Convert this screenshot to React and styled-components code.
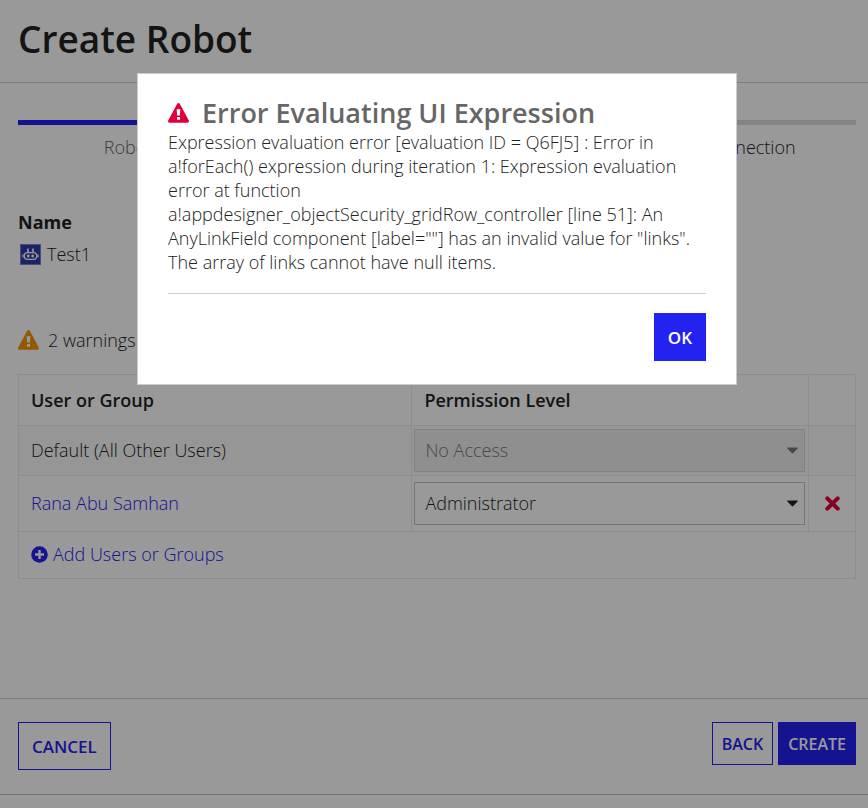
import React from 'react';
import styled, { createGlobalStyle } from 'styled-components';

const GlobalStyle = createGlobalStyle`
  * {
    box-sizing: border-box;
  }
  body {
    margin: 0;
    background: #fff;
    color: #222;
    font-family: 'Open Sans', 'Noto Sans', sans-serif;
    font-size: 18px;
    font-weight: 300;
    line-height: 24px;
  }
`;

const Page = styled.div`
  display: flex;
  flex-direction: column;
  min-height: 100vh;
  padding-bottom: 13px;
`;

const Header = styled.header`
  padding: 14px 12px 18px 18px;
  border-bottom: 1px solid #d3d3d3;
`;

const PageTitle = styled.h1`
  margin: 0;
  font-size: 37px;
  line-height: 50px;
  font-weight: 600;
`;

const Main = styled.main`
  flex: 1;
  padding: 37px 12px 24px 18px;
`;

const Steps = styled.ol`
  display: grid;
  grid-template-columns: repeat(3, 1fr);
  margin: 0;
  padding: 0;
  list-style: none;
`;

const Step = styled.li`
  padding-top: 10px;
  border-top: 5px solid ${(props) => (props.$done ? '#2322f0' : '#dcdcdc')};
  color: ${(props) => (props.$done ? '#666' : '#222')};
  text-align: center;
`;

const Field = styled.section`
  margin-top: 51px;
`;

const FieldLabel = styled.h2`
  margin: 0 0 8px;
  font-size: 18px;
  line-height: 24px;
  font-weight: 700;
`;

const FieldValue = styled.div`
  display: flex;
  align-items: center;
  gap: 6px;
  padding-left: 2px;
`;

const Warnings = styled.div`
  display: flex;
  align-items: center;
  gap: 9px;
  margin: 62px 0 22px;
`;

const Grid = styled.table`
  width: 100%;
  table-layout: fixed;
  border-collapse: collapse;

  th,
  td {
    padding: 0 12px;
    border: 1px solid #ebebeb;
    text-align: left;
  }
  th {
    height: 51px;
    font-weight: 600;
  }
`;

const UserColumn = styled.col`
  width: 47%;
`;

const RemoveColumn = styled.col`
  width: 47px;
`;

const GridRow = styled.tr`
  height: ${(props) => props.$height}px;
  background: ${(props) => (props.$muted ? '#fafafa' : 'transparent')};

  .user {
    padding-bottom: 2px;
  }
  .control {
    padding: 0 3px 0 2px;
  }
  .remove {
    padding: 0;
    text-align: center;
  }
`;

const SelectBox = styled.div`
  display: grid;
  align-items: center;

  select,
  svg {
    grid-area: 1 / 1;
  }
  svg {
    justify-self: end;
    margin-right: 7px;
    pointer-events: none;
  }
`;

const Select = styled.select`
  width: 100%;
  height: 43px;
  padding: 0 28px 2px 10px;
  appearance: none;
  border: 1px solid ${(props) => (props.disabled ? '#dadada' : '#c4c4c4')};
  border-radius: 0;
  background: ${(props) => (props.disabled ? '#eee' : '#fff')};
  color: ${(props) => (props.disabled ? '#777' : '#222')};
  font: inherit;
  opacity: 1;
`;

const Link = styled.a`
  display: inline-flex;
  align-items: center;
  gap: 5px;
  color: #2322f0;
  text-decoration: none;
`;

const IconButton = styled.button`
  display: inline-flex;
  padding: 0;
  border: 0;
  background: none;
`;

const Footer = styled.footer`
  display: flex;
  justify-content: space-between;
  align-items: flex-start;
  padding: 23px 12px 24px 18px;
  border-top: 1px solid #d3d3d3;
  border-bottom: 1px solid #bbb;
`;

const ButtonGroup = styled.div`
  display: flex;
  gap: 5px;
`;

const Button = styled.button`
  height: ${(props) => (props.$small ? 43 : 48)}px;
  padding: 0 ${(props) => (props.$small ? 9 : 13)}px;
  border: 1px solid #2322f0;
  background: ${(props) => (props.$primary ? '#2322f0' : 'transparent')};
  color: ${(props) => (props.$primary ? '#fff' : '#2322f0')};
  font-family: inherit;
  font-size: ${(props) => (props.$small ? 16 : 17)}px;
  font-weight: 600;
  text-transform: uppercase;
`;

const Backdrop = styled.div`
  position: fixed;
  inset: 0;
  display: flex;
  justify-content: center;
  align-items: flex-start;
  padding: 73px 0 0 6px;
  background: rgba(0, 0, 0, 0.4);
`;

const Dialog = styled.div`
  width: 100%;
  max-width: 600px;
  padding: 22px 30px 23px;
  border: 1px solid #ccc;
  background: #fff;
`;

const DialogHeading = styled.div`
  display: flex;
  align-items: center;
  gap: 13px;
`;

const DialogTitle = styled.h2`
  margin: 0;
  color: #666;
  font-size: 27px;
  line-height: 34px;
  font-weight: 600;
`;

const DialogText = styled.p`
  margin: 0;
  padding-bottom: 19px;
  border-bottom: 1px solid #ccc;
`;

const DialogActions = styled.div`
  display: flex;
  justify-content: flex-end;
  padding-top: 19px;
`;

function WarningIcon({ color }) {
  return (
    <svg width="21" height="20" viewBox="0 0 21 20" aria-hidden="true">
      <path
        fill={color}
        fillRule="evenodd"
        d="M10.500 0c.5 0 1 .3 1.300.8l9 16.800c.5.900-.1 2.100-1.300 2.100h-18c-1.200 0-1.800-1.200-1.300-2.100l9-16.800c.3-.5.8-.8 1.300-.8zM8.700 6.200l.4 6.300h2.800l.4-6.300zM9 14v2.700h3V14z"
      />
    </svg>
  );
}

function RobotIcon() {
  return (
    <svg width="21" height="21" viewBox="0 0 21 21" aria-hidden="true">
      <rect x=".5" y=".5" width="20" height="20" fill="#2b3ba8" stroke="#7780c0" />
      <g fill="none" stroke="#fff" strokeWidth="1.300">
        <path d="M8 4.500v4.500M13 4.500v4.500" strokeWidth="1.600" />
        <path d="M7.500 8.600h6c2 0 3.200 1.500 3.200 3.400s-1.200 3.400-3.200 3.400h-6c-2 0-3.200-1.500-3.200-3.400s1.200-3.400 3.200-3.400z" />
        <path d="M3 10.500v3M18 10.500v3" />
      </g>
      <circle cx="8.300" cy="12" r="1.400" fill="#fff" />
      <circle cx="12.700" cy="12" r="1.400" fill="#fff" />
    </svg>
  );
}

function PlusIcon() {
  return (
    <svg width="17" height="17" viewBox="0 0 17 17" aria-hidden="true">
      <circle cx="8.500" cy="8.500" r="8.300" fill="#2322f0" />
      <path d="M8.500 4v9M4 8.500h9" stroke="#fff" strokeWidth="2.400" />
    </svg>
  );
}

function RemoveIcon() {
  return (
    <svg width="15" height="15" viewBox="0 0 15 15" aria-hidden="true">
      <path d="M2.300 2.300l10.400 10.400M12.700 2.300L2.300 12.700" stroke="#de0037" strokeWidth="4" strokeLinecap="round" />
    </svg>
  );
}

function PermissionSelect({ label, value, disabled }) {
  return (
    <SelectBox>
      <Select aria-label={label} defaultValue={value} disabled={disabled}>
        <option>No Access</option>
        <option>Viewer</option>
        <option>Editor</option>
        <option>Administrator</option>
      </Select>
      <svg width="11" height="7" viewBox="0 0 11 7" aria-hidden="true">
        <path d="M.8.500h9.400c.6 0 .8.600.4 1L6.200 6.100c-.4.400-1 .4-1.400 0L.4 1.500C0 1.100.2.500.8.500z" fill={disabled ? '#777' : '#222'} />
      </svg>
    </SelectBox>
  );
}

export default function App() {
  return (
    <>
      <GlobalStyle />
      <Page>
        <Header>
          <PageTitle>Create Robot</PageTitle>
        </Header>
        <Main>
          <Steps>
            <Step $done>Robot Details</Step>
            <Step>Security</Step>
            <Step>Choose Connection</Step>
          </Steps>
          <Field>
            <FieldLabel>Name</FieldLabel>
            <FieldValue>
              <RobotIcon />
              Test1
            </FieldValue>
          </Field>
          <Warnings>
            <WarningIcon color="#f79400" />
            2 warnings
          </Warnings>
          <Grid>
            <colgroup>
              <UserColumn />
              <col />
              <RemoveColumn />
            </colgroup>
            <thead>
              <tr>
                <th scope="col">User or Group</th>
                <th scope="col">Permission Level</th>
                <th aria-label="Remove" />
              </tr>
            </thead>
            <tbody>
              <GridRow $height={50} $muted>
                <td className="user">Default (All Other Users)</td>
                <td className="control">
                  <PermissionSelect label="Default permission" value="No Access" disabled />
                </td>
                <td />
              </GridRow>
              <GridRow $height={56}>
                <td className="user">
                  <Link href="#user">Rana Abu Samhan</Link>
                </td>
                <td className="control">
                  <PermissionSelect label="Rana Abu Samhan permission" value="Administrator" />
                </td>
                <td className="remove">
                  <IconButton type="button" aria-label="Remove Rana Abu Samhan">
                    <RemoveIcon />
                  </IconButton>
                </td>
              </GridRow>
              <GridRow $height={47}>
                <td colSpan={3}>
                  <Link href="#add">
                    <PlusIcon />
                    Add Users or Groups
                  </Link>
                </td>
              </GridRow>
            </tbody>
          </Grid>
        </Main>
        <Footer>
          <Button type="button">Cancel</Button>
          <ButtonGroup>
            <Button type="button" $small>Back</Button>
            <Button type="button" $small $primary>Create</Button>
          </ButtonGroup>
        </Footer>
      </Page>
      <Backdrop>
        <Dialog role="alertdialog" aria-modal="true" aria-labelledby="error-title" aria-describedby="error-text">
          <DialogHeading>
            <WarningIcon color="#e0003b" />
            <DialogTitle id="error-title">Error Evaluating UI Expression</DialogTitle>
          </DialogHeading>
          <DialogText id="error-text">
            Expression evaluation error [evaluation ID = Q6FJ5] : Error in
            a!forEach() expression during iteration 1: Expression evaluation
            error at function
            <br />
            a!appdesigner_objectSecurity_gridRow_controller [line 51]: An
            AnyLinkField component [label=""] has an invalid value for "links".
            The array of links cannot have null items.
          </DialogText>
          <DialogActions>
            <Button type="button" $primary>OK</Button>
          </DialogActions>
        </Dialog>
      </Backdrop>
    </>
  );
}
